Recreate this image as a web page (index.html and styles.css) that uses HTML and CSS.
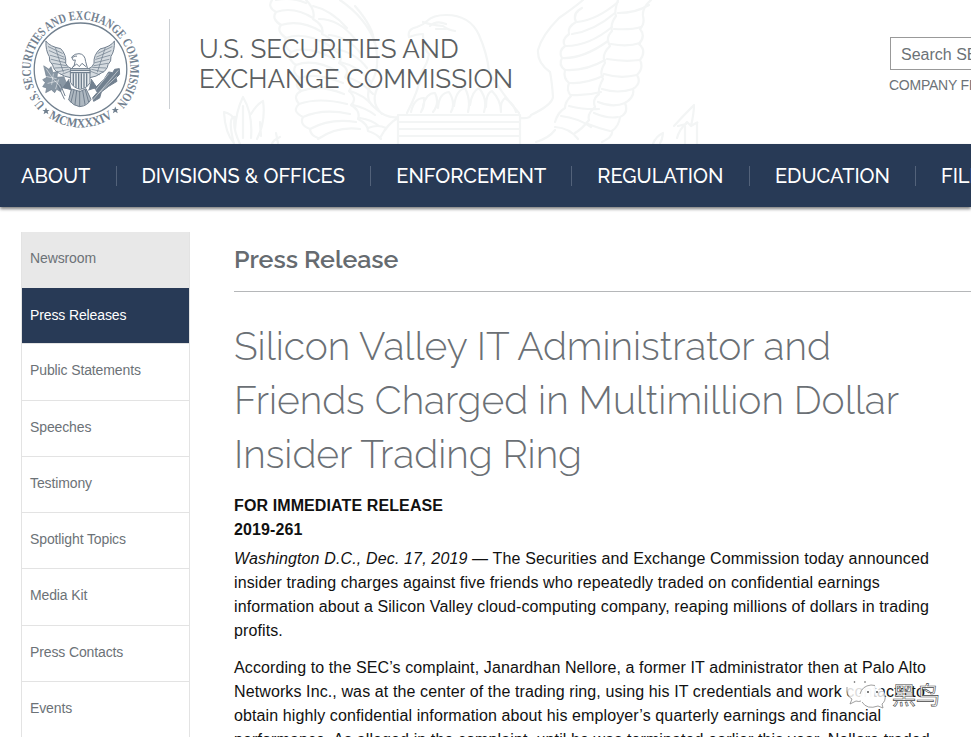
FILE: index.html
```html
<!DOCTYPE html>
<html lang="en">
<head>
<meta charset="utf-8">
<title>SEC.gov | Press Release</title>
<link rel="stylesheet" href="styles.css">
</head>
<body>
<header class="banner">
  <svg class="watermark" viewBox="200 0 540 144" width="540" height="144" fill="none" stroke="#f3f5f5" stroke-width="2.2" stroke-linecap="round" stroke-linejoin="round">
    <path d="M272 0q-5 7 4 12q-5 7 5 13q-5 6 5 13q-4 7 5 14q-4 7 5 13q-5 8 4 13q-7 7 1 13q-9 5-2 13q-8 7 4 13q-4 8 7 12q0 6 8 9"/>
    <path d="M276 12q18-6 37 6M281 25q20-6 41 7M286 38q19-7 44 8M291 52q17-7 43 7M296 65q18-7 43 7M300 78q16-6 43 5M301 91q18-7 43 3M299 104q20-7 48 0M303 117q20-9 47-3M310 129q20-11 46-7M318 139q19-13 42-10M276 0q16-3 30 3"/>
    <path d="M306 0q10 10 7 19q12 7 9 15q14 6 9 15q14 5 8 14q12 6 6 14q10 7 4 14q9 8 2 14q10 6 7 14q10 5 10 12q9 3 13 8"/>
    <path d="M319 19q20 0 36 20M329 35q20 2 33 20M335 49q20 3 32 19M340 62q18 4 30 19M346 77q14 3 27 17M350 91q14 4 23 15M353 105q13 3 22 10M360 118q12 2 19 8M313 6q18 4 34 22M368 128q10-4 18 0"/>
    <path d="M340 0q25 17 35 42q6 26-4 41q-7 17 3 24q12 12 24 10M355 6q19 22 19 36M380 138q8-15 18-20M379 85q-10 17 3 29"/>
    <path d="M409 37q-2-8 8-10q6-2 10-6q6-6 19-6q24 0 33 20q8 18 10 36q10 19 30 42M409 37q8-3 14-3q0 15 6 20q-2 11-7 17q-3 19-15 42M423 22q8 3 20 4q5 4 12 5M430 26q6-6 16-2M436 29h10"/>
    <path d="M411 112q3-14 13-14q1 8-3 14M423 106q3-13 12-13q5 10-2 19M438 108q1-15 11-16q7 11 2 20M454 106q2-16 11-18q6 12 3 24M470 105q2-14 9-17q9 11 5 24M486 107q0-14 6-16q9 9 9 21M501 111q-1-9 4-13q9 6 11 14"/>
    <path d="M398 115h122v29M398 115v29M398 122h122M398 129h122M398 136h122M520 118q10 1 11-3q21-10 22-18q-1-15-3-25q-13-9-12-22q4-15 21-32q16-11 24-18M536 142q13-4 19-12"/>
    <path d="M582 8q-10 5-6 14q-9 5-7 12q-8 6-4 12q-7 5-3 12q-4 7 3 12q-2 8 4 13q-3 7 2 13q-6 6-6 12q-7 4-10 14"/>
    <path d="M651 0q-9 8-8 16q2 8-3 13q6 7-1 15q8 7 1 16q4 8-3 15q5 8-4 14q2 8-8 14q4 10-5 14q-1 9-8 14q1 6-10 11"/>
    <path d="M618 0q-4 12-2 16q-6 8-4 15q-7 7-2 15q-9 9-5 17q-6 9-2 16q-5 9-4 15q-7 5-4 13q-8 7-6 13q-7 9-14 13"/>
    <path d="M577 22q20-2 41-20M572 34q22-3 43-21M566 46q23 0 46-19M562 58q21 1 46-17M566 70q20 1 39-10M570 83q15 1 33-7M571 95q15 1 30-3M569 106q17 4 30 3M561 116q17 2 30 11M555 127q15 1 23 12M618 13q18 0 31-8M614 29q18 1 27-2M611 44q17 3 29-1M607 59q17 3 33 1M604 74q16 5 33 1M602 89q16 5 31 0M598 102q15 6 27 1M594 113q14 6 24 4M588 124q13 5 22 7"/>
    <path d="M240 144q-8-17-5-27q-8-1-1 27M235 130q1-19 8-33q10 17 8 41M251 114q6-10 12-13q3 20-6 38M260 122l1 14M224 112q8 2 11 8M280 137q-7 3-8 7M276 133l2 10M224 112q1 21 10 31M243 106v32"/>
    <path d="M674 126q9-10 20-21q0 8-3 21l-4-4q-8 8-10 16M678 126l8-2M691 126q8-5 6-3v21M653 144q3-8 10-11q-1 8-3 10M685 126v18"/>
  </svg>
  <svg class="seal" viewBox="0 0 160 144" width="160" height="144">
    <defs>
      <path id="ring-top" d="M45.3 104.7A49.8 49.8 0 1 1 115.7 104.7"/>
      <path id="ring-bottom" d="M48.5 117.7A57.8 57.8 0 0 0 112.5 117.7"/>
    </defs>
    <g class="ring-text">
      <text><textPath href="#ring-top" textLength="233" lengthAdjust="spacingAndGlyphs">U.S. SECURITIES AND EXCHANGE COMMISSION</textPath></text>
      <text><textPath href="#ring-bottom" textLength="68" lengthAdjust="spacingAndGlyphs">MCMXXXIV</textPath></text>
    </g>
    <path id="star" fill="#71808f" d="M46 107.5l1 2.4h2.6l-2 1.7l.8 2.6l-2.4-1.5l-2.4 1.5l.8-2.6l-2-1.7h2.6z"/>
    <use href="#star" x="69.3" y="-1"/>
    <circle cx="80.5" cy="69.3" r="46.3" fill="none" stroke="#71808f" stroke-width="1.3"/>
    <g transform="scale(.33333)" stroke="#71808f" stroke-width="3" stroke-linejoin="round" stroke-linecap="round" fill="none">
      <path fill="#d5dbe0" d="M138 124q12 16 44 22q18 18 15 44q5 13 18 16v28q-24-4-37-14q-17-8-20-25q-12-10-10-25q-12-20-10-46zM343 124q-11 16-43 23q-20 18-18 43q-5 13-16 16v28q25-4 38-15q18-8 20-25q11-10 9-25q12-18 10-45z"/>
      <path stroke-width="2.2" d="M145 140l42 20M148 152l43 19M151 166l43 12M154 178l42 10M158 190l41 7M164 204l39-2M171 216l35-8M183 224l26-10M336 140l-42 20M333 152l-43 19M330 166l-43 12M327 178l-42 10M323 190l-41 7M317 204l-39-2M310 216l-35-8M298 224l-26-10M166 142l10 32l14 42M316 142l-10 32l-14 42"/>
      <path fill="#fff" d="M219 180l-4-9q10-11 22-10q18 1 20 24l6 22h-49q12-10 12-26z"/>
      <path d="M218 172q8-6 12-4M220 200l10-8l8 8l8-10l12 10"/>
      <path fill="#e5e9ec" d="M212 206h58v42q-8 16-29 20q-20-4-29-20z"/>
      <path stroke-width="4" d="M212 211h58M212 218h58M220 222v34M228 222v39M236 222v43M244 222v43M252 222v40M260 222v36"/>
      <path fill="#aeb8c1" d="M214 268l-8 32q15 18 33 20q24-2 34-22l-15-32l-17 8z"/>
      <path d="M222 270l-9 36M230 272l-5 41M239 273v46M248 272l7 41M256 270l10 36"/>
      <path fill="#8997a4" stroke-width="2" d="M132 198l15 10l6-8l6 18l14-4l-2 18l21-2l5 14l12 10l-6 12l-17-3l-4 12l-12-7l-6 10l-10-9l-17 9l3-14l-12-4l8-12l-8-9l11-6z"/>
      <path stroke="#fff" stroke-width="1.5" d="M139 207q17 30 45 57M137 229l32 7M144 250l28-7M160 222l-5 31M176 239l-9 27"/>
      <path d="M173 255l20 42M181 253l14 34"/>
      <path fill="#71808f" d="M357 206l-13 2l-6 10l-12-2l-14 22l-28 27l8 12l-14 16l3 11l18-10l5-18l22-17l25-15l-3-10l10-10z"/>
      <path stroke="#fff" stroke-width="1.5" d="M354 212l-74 86M350 230l-54 50M326 221l-40 50"/>
      <path fill="#71808f" d="M207 238l-17 24l25 8M274 238l16 24l-24 8"/>
    </g>
  </svg>
  <div class="name"><span>U.S. SECURITIES AND</span><span>EXCHANGE COMMISSION</span></div>
  <div class="search">
    <div class="box">Search SEC.gov</div>
    <div class="filings">COMPANY FILINGS</div>
  </div>
</header>
<nav class="nav">
  <a class="t1">ABOUT</a><a class="t2">DIVISIONS &amp; OFFICES</a><a class="t3">ENFORCEMENT</a><a class="t4">REGULATION</a><a class="t5">EDUCATION</a><a class="t6">FILINGS</a>
</nav>
<div class="page">
  <ul class="side">
    <li class="top">Newsroom</li>
    <li class="active">Press Releases</li>
    <li>Public Statements</li>
    <li>Speeches</li>
    <li>Testimony</li>
    <li>Spotlight Topics</li>
    <li>Media Kit</li>
    <li>Press Contacts</li>
    <li>Events</li>
  </ul>
  <main class="main">
    <h2>Press Release</h2>
    <h1>Silicon Valley IT Administrator and<br>Friends Charged in Multimillion Dollar<br>Insider Trading Ring</h1>
    <p class="release">FOR IMMEDIATE RELEASE<br>2019-261</p>
    <p><span class="lead"><em>Washington D.C., Dec. 17, 2019</em> — The Securities and Exchange Commission today announced</span><br>insider trading charges against five friends who repeatedly traded on confidential earnings<br><span class="tight">information about a Silicon Valley cloud-computing company, reaping millions of dollars in trading</span><br>profits.</p>
    <p>According to the SEC’s complaint, Janardhan Nellore, a former IT administrator then at Palo Alto<br>Networks Inc., was at the center of the trading ring, using his IT credentials and work contacts to<br>obtain highly confidential information about his employer’s quarterly earnings and financial<br>performance. As alleged in the complaint, until he was terminated earlier this year, Nellore traded</p>
  </main>
</div>
<div class="credit">
  <svg viewBox="0 0 42 34" width="42" height="34" fill="#fff" stroke="#888" stroke-width=".8">
    <path stroke="none" fill-opacity=".85" d="M15 2C7 2 2 7 2 13q0 6 5 9l-2 5l6-3q12 2 18-5q5-17-14-17z"/>
    <path stroke="none" fill-opacity=".8" d="M27 8c-7 0-12 5-12 11s5 11 12 11q4 0 6-1l5 2l-1-4q3-3 3-8c0-6-6-11-13-11z"/>
    <path fill="none" d="M2 10q-1 9 5 12l-2 5l6-3q3 1 5 0M15 17q2-8 11-9l4 .5M40 18q1 6-3 9l1 4l-5-2q-11 4-16-4"/>
    <g fill="#555" stroke="none"><circle cx="9.500" cy="5" r=".8"/><circle cx="20" cy="5" r=".8"/><circle cx="23" cy="15" r="1"/><circle cx="32" cy="15" r="1"/></g>
  </svg>
  <span>黑鸟</span>
</div>
</body>
</html>
```
FILE: styles.css
```css
* { box-sizing: border-box; }
body { margin: 0; width: 971px; height: 737px; overflow: hidden; position: relative; background: #fff; font-family: "Liberation Sans", Arial, sans-serif; color: #111; }
.banner { height: 144px; display: flex; position: relative; overflow: hidden; }
.watermark { position: absolute; left: 200px; top: 0; }
.seal { flex: none; }
.ring-text { font: bold 13px "Liberation Serif", serif; fill: #71808f; }
.name { position: relative; flex: none; width: 720px; height: 90px; margin: 19px 0 0 9px; padding: 15px 0 0 29px; border-left: 1px solid #ccd0d4; font: 26px/30px Raleway, Lato, sans-serif; color: #5c5f62; }
.name span { display: block; white-space: nowrap; }
.search { flex: none; width: 81px; margin-top: 37px; position: relative; margin-left: 1px; }
.box { width: 200px; height: 33px; border: 1px solid #999; background: #fff; padding: 0 10px; font-size: 16px; line-height: 33px; color: #6c7277; white-space: nowrap; }
.filings { margin: 6px 0 0 -1px; font-size: 14px; line-height: 18px; letter-spacing: -.25px; color: #6c7277; white-space: nowrap; }
.nav { position: relative; height: 63px; background: #283a56; display: flex; align-items: center; padding-left: 21px; box-shadow: 0 2px 3px rgba(0,0,0,.5); font: 500 20px/20px Raleway, Lato, sans-serif; color: #fff; white-space: nowrap; }
.nav a { flex: none; height: 20px; border-right: 1px solid #53627a; margin-right: 25px; }
.nav .t1 { width: 95.5px; }
.nav .t2 { width: 229.8px; }
.nav .t3 { width: 176px; }
.nav .t4 { width: 152.7px; }
.nav .t5 { width: 141px; }
.nav .t6 { width: 30px; margin: 0; border: 0; }
.page { display: flex; padding: 25px 0 0 21px; }
.side { flex: none; list-style: none; margin: 0; padding: 0; width: 169px; height: 505px; overflow: hidden; border: 1px solid #e3e3e3; border-width: 0 1px; font-size: 14px; letter-spacing: -.12px; color: #6c7277; }
.side li { height: 56.22px; padding: 0 8px; line-height: 53.6px; border-bottom: 1px solid #e3e3e3; }
.side .top { background: #e8e8e8; border-bottom: 0; line-height: 53px; }
.side .active { background: #283a56; color: #fff; line-height: 54px; }
.main { flex: none; width: 737px; margin-left: 44px; }
h2 { margin: 0; height: 60px; padding-top: 13px; border-bottom: 1px solid #b5b7b9; font: 600 25px/29px Raleway, Lato, sans-serif; letter-spacing: -.04px; color: #666b70; }
h1 { margin: 27px 0 13px; font: 300 39px/54px Raleway, Lato, sans-serif; letter-spacing: -.02px; color: #6b7075; white-space: nowrap; }
p { margin: 0 0 13px; font-size: 16px; line-height: 24px; letter-spacing: .11px; white-space: nowrap; }
.lead { letter-spacing: .145px; }
.tight { letter-spacing: .1px; }
.release { font-weight: bold; margin-bottom: 5px; }
.credit { position: absolute; left: 845px; top: 677px; display: flex; align-items: center; gap: 5px; font: 24px/30px "Noto Sans CJK SC", sans-serif; color: #fff; -webkit-text-stroke: .6px #444; }
```
